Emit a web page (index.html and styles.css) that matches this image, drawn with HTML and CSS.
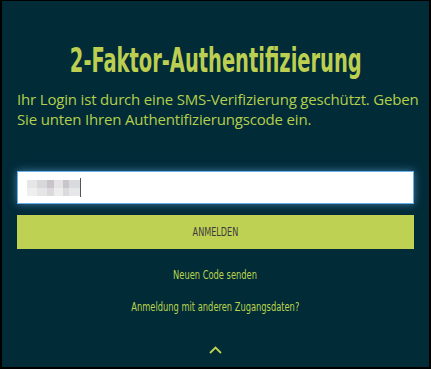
FILE: index.html
```html
<!DOCTYPE html>
<html lang="de">
<head>
    <meta charset="UTF-8">
    <meta name="viewport" content="width=device-width, initial-scale=1.0">
    <title>2-Faktor-Authentifizierung</title>
    <link rel="stylesheet" href="styles.css">
</head>
<body>
<div class="panel">
    <h1 class="title"><span class="narrow">2-Faktor-Authentifizierung</span></h1>
    <p class="intro">
        Ihr Login ist durch eine SMS-Verifizierung geschützt. Geben<br>
        Sie unten Ihren Authentifizierungscode ein.
    </p>
    <div class="code-input">
        <span class="mosaic"></span><span class="caret"></span>
    </div>
    <button class="submit"><span class="narrow">ANMELDEN</span></button>
    <a class="link first" href="#"><span class="narrow">Neuen Code senden</span></a>
    <a class="link" href="#"><span class="narrow">Anmeldung mit anderen Zugangsdaten?</span></a>
    <div class="up">
        <svg width="13" height="8" viewBox="0 0 13 8">
            <path d="M1 7 L6.5 1.5 L12 7" fill="none" stroke="#bfd153" stroke-width="1.8"/>
        </svg>
    </div>
</div>
</body>
</html>
```

FILE: styles.css
```css
* {
    box-sizing: border-box;
}

html, body {
    margin: 0;
    height: 369px;
    background: #000;
}

body {
    padding: 1px 2px 2px 2px;
    overflow: hidden;
}

.panel {
    height: 100%;
    background: #022b38;
    padding: 40px 15px 0 15px;
    display: flex;
    flex-direction: column;
    overflow: hidden;
}

.narrow {
    display: inline-block;
    font-family: "DejaVu Sans Condensed", "DejaVu Sans", sans-serif;
    white-space: nowrap;
}

.title {
    margin: 0;
    display: flex;
    justify-content: center;
    font-size: 33px;
    line-height: 40px;
    font-weight: bold;
    color: #bccf50;
}

.title .narrow {
    flex: none;
    transform: scaleX(0.655);
}

.intro {
    margin: 8px 0 0 0;
    font-family: "Open Sans", sans-serif;
    font-size: 15px;
    line-height: 20px;
    letter-spacing: -0.17px;
    color: #b3cf4c;
    white-space: nowrap;
}

.code-input {
    margin-top: 42px;
    height: 33px;
    background: #fff;
    border: 1px solid #66afe9;
    box-shadow: 0 0 8px rgba(102, 175, 233, 0.6);
    display: flex;
    align-items: center;
    padding-left: 9px;
}

.mosaic {
    width: 53px;
    height: 16px;
    background:
        linear-gradient(180deg, rgba(255, 255, 255, 0) 0 8px, rgba(255, 255, 255, 0.35) 8px 16px),
        linear-gradient(90deg, #e6e6e6 0 10px, #d8d8da 10px 20px, #c8c4ca 20px 27px, #e4e4e4 27px 36px, #c9c6cb 36px 42px, #d8dadd 42px 53px);
}

.caret {
    width: 1px;
    height: 19px;
    background: #555;
}

.submit {
    margin-top: 11px;
    height: 34px;
    border: none;
    background: #bfd153;
    color: #3b3a3f;
    font-size: 12px;
    padding: 0;
}

.submit .narrow {
    transform: scaleX(0.75);
}

.link {
    display: block;
    text-align: center;
    font-size: 13px;
    line-height: 16px;
    color: #b9d44c;
    text-decoration: none;
    margin-top: 16px;
}

.link.first {
    margin-top: 18px;
}

.link .narrow {
    transform: scaleX(0.71);
}

.up {
    margin-top: 31px;
    text-align: center;
    line-height: 0;
}
```
